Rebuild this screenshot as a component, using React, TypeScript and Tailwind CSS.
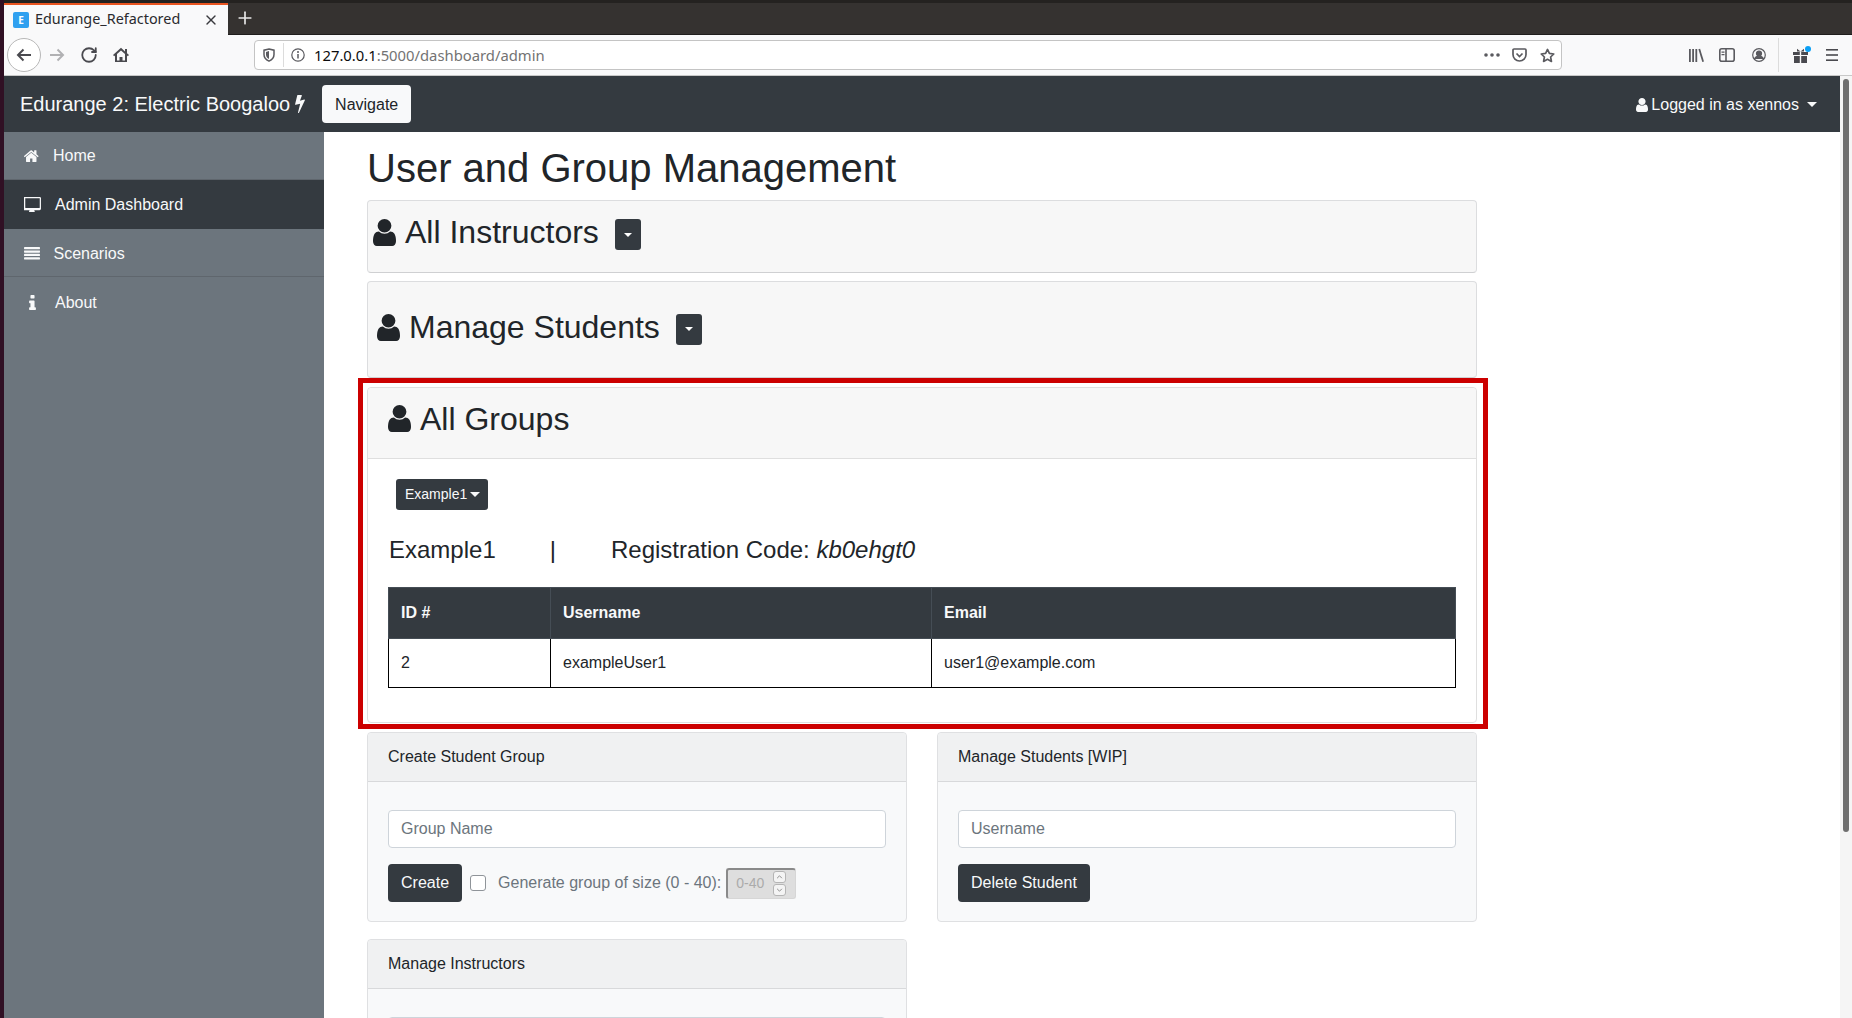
import { X, Plus, RotateCw } from "lucide-react";
import type { ReactNode } from "react";

const USER = "M1536 1399q0 109-62.5 187t-150.5 78h-854q-88 0-150.5-78t-62.5-187q0-85 8.5-160.5t31.5-151.5 58.5-130 94-88.5 134.5-34.5q131 128 313 128t313-128q76 0 134.5 34.5t94 88.5 58.5 130 31.5 151.5 8.5 160.5zm-256-887q0 159-112.5 271.5t-271.5 112.5-271.5-112.5-112.5-271.5 112.5-271.5 271.5-112.5 271.5 112.5 112.5 271.5z";

function UserIcon({ className }: { className: string }) {
  return <svg viewBox="256 128 1280 1536" className={className} fill="currentColor" preserveAspectRatio="none"><path d={USER} /></svg>;
}

function Caret({ small }: { small?: boolean }) {
  return <span className={"inline-block w-0 h-0 border-x-transparent border-t-current " + (small ? "border-x-[4px] border-t-[4px]" : "border-x-[5px] border-t-[5px]")} />;
}

function NavRow({ icon, label, h, active, border = true, nudge = "" }: { icon: ReactNode; label: string; h: string; active?: boolean; border?: boolean; nudge?: string }) {
  return (
    <div className={"flex items-center pl-[20px] text-[16px] text-[#f8f9fa] " + h + " " + nudge + " " + (active ? "bg-[#343a40] " : "") + (border ? "border-b border-[#5f666d]" : "")}>
      {icon}
      <span>{label}</span>
    </div>
  );
}

function CollapsedCard({ title, h, iconLeft, top, btnGap, btnTop }: { title: string; h: string; iconLeft: string; top: string; btnGap: string; btnTop: string }) {
  return (
    <div className={"rounded-[4px] border border-[#dcdddf] border-b-[#cfd0d2] bg-[#f7f7f7] " + h}>
      <div className={"flex items-center " + iconLeft + " " + top}>
        <UserIcon className="w-[23px] h-[27px] text-[#212529] mr-[9px]" />
        <span className="text-[32px] leading-[38px] text-[#212529]">{title}</span>
        <span className={"w-[26px] h-[31px] rounded-[3px] bg-[#343a40] flex items-center justify-center text-white " + btnGap + " " + btnTop}>
          <Caret small />
        </span>
      </div>
    </div>
  );
}

function FormCard({ title, children }: { title: string; children: ReactNode }) {
  return (
    <div className="rounded-[4px] border border-[#dfe0e2] bg-[#f8f9fa] w-full">
      <div className="h-[49px] px-[20px] flex items-center border-b border-[#d8d9db] bg-[#f0f1f2] text-[16px] text-[#212529] rounded-t-[4px]">{title}</div>
      <div className="px-[20px] pt-[28px]">{children}</div>
    </div>
  );
}

function TextInput({ placeholder }: { placeholder?: string }) {
  return (
    <div className="h-[38px] rounded-[4px] border border-[#ced4da] bg-white px-[12px] flex items-center text-[16px] text-[#6c757d]">{placeholder}</div>
  );
}

function DarkButton({ label }: { label: string }) {
  return <span className="h-[38px] px-[13px] rounded-[4px] bg-[#343a40] text-[#f8f9fa] text-[16px] flex items-center">{label}</span>;
}

export default function App() {
  return (
    <div className="w-[1852px] h-[1018px] overflow-hidden flex bg-[#301024] font-['Liberation_Sans',Arial,sans-serif]">
      <div className="w-[4px] shrink-0" />
      <div className="flex-1 flex flex-col min-w-0">
        {/* tab strip */}
        <div className="h-[35px] shrink-0 bg-[#353230] flex items-end relative">
          <div className="absolute inset-x-0 top-0 h-[3px] bg-[#242220]" />
          <div className="absolute inset-x-0 bottom-0 h-px bg-[#1f1d1c]" />
          <div className="z-10 w-[224px] h-[32px] bg-[#f9f9fa] border-t-2 border-[#e95420] flex items-center pl-[9px] relative font-['Noto_Sans',sans-serif]">
            <span className="w-[16px] h-[16px] rounded-[2px] bg-[#30a0f0] text-white text-[10px] font-bold flex items-center justify-center">E</span>
            <span className="ml-[6px] -mt-[2px] text-[14.4px] text-[#2a2a2e]">Edurange_Refactored</span>
            <X className="absolute right-[9px] top-[7px] w-[16px] h-[16px] text-[#3a3a3e]" />
          </div>
          <div className="w-[34px] h-[32px] pb-[2px] flex items-center justify-center">
            <Plus className="w-[20px] h-[20px] text-[#e8e8e8]" />
          </div>
        </div>
        {/* toolbar */}
        <div className="h-[41px] shrink-0 bg-[#f9f9fa] border-b border-[#c8c8c8] flex items-center relative text-[#5a5a5f]">
          <span className="ml-[3px] w-[34px] h-[34px] shrink-0 rounded-full border border-[#b8b8b8] bg-white flex items-center justify-center">
            <svg viewBox="0 0 16 16" className="w-[16px] h-[16px] text-[#4a4a4f]" fill="none" stroke="currentColor" strokeWidth="2"><path d="M15 8H2M7.5 2.5L2 8l5.5 5.5" /></svg>
          </span>
          <svg viewBox="0 0 16 16" className="ml-[8px] w-[16px] h-[16px] text-[#b1b1b3]" fill="none" stroke="currentColor" strokeWidth="2"><path d="M1 8h13M8.5 2.5L14 8l-5.5 5.5" /></svg>
          <RotateCw className="ml-[15px] w-[18px] h-[18px] text-[#4a4a4f]" strokeWidth={2.4} />
          <svg viewBox="0 0 16 16" className="ml-[15px] w-[16px] h-[16px] text-[#4a4a4f]" fill="currentColor"><path d="M8 .8L0 8l1.2 1.3L2 8.6V15h12V8.6l.8.7L16 8l-2-1.8V2h-2v2.4L8 .8zM8 3.4l4 3.6V13.4h-2.5V10h-3v3.4H4V7l4-3.6z" /></svg>
          <div className="ml-[125px] w-[1308px] h-[30px] shrink-0 rounded-[4px] border border-[#c4c4c4] bg-white flex items-center">
            <svg viewBox="0 0 12 14" className="ml-[8px] w-[12px] h-[14px]" fill="none" stroke="currentColor" strokeWidth="1.5"><path d="M6 .9l5 1.3v4.3c0 3.2-2.2 5.4-5 6.6-2.8-1.2-5-3.4-5-6.6V2.2z" /><path d="M6 3v8c-1.8-.9-3-2.4-3-4.5V4z" fill="currentColor" stroke="none" /></svg>
            <span className="ml-[8px] h-[24px] w-px bg-[#dcdcdc]" />
            <svg viewBox="0 0 14 14" className="ml-[7px] w-[14px] h-[14px]" fill="none" stroke="currentColor" strokeWidth="1.2"><circle cx="7" cy="7" r="6.2" /><path d="M7 6v4.5" strokeWidth="1.5" /><circle cx="7" cy="3.9" r="1" fill="currentColor" stroke="none" /></svg>
            <span className="ml-[9px] text-[14.8px] text-[#0c0c0d] font-['Noto_Sans',sans-serif]">127.0.0.1<span className="text-[#737373]">:5000/dashboard/admin</span></span>
            <svg viewBox="0 0 16 4" className="ml-auto w-[16px] h-[4px]" fill="currentColor"><circle cx="2" cy="2" r="1.8" /><circle cx="8" cy="2" r="1.8" /><circle cx="14" cy="2" r="1.8" /></svg>
            <svg viewBox="0 0 15 15" className="ml-[12px] w-[15px] h-[15px]" fill="none" stroke="currentColor" strokeWidth="1.7"><path d="M2 1h11a1 1 0 0 1 1 1v4.5a6.5 6.5 0 0 1-13 0V2a1 1 0 0 1 1-1z" /><path d="M4.5 5.5l3 3 3-3" /></svg>
            <svg viewBox="0 0 16 16" className="ml-[13px] mr-[6px] w-[15px] h-[15px]" fill="none" stroke="currentColor" strokeWidth="1.8" strokeLinejoin="round"><path d="M8 1.5l2 4.3 4.7.6-3.4 3.2.9 4.7L8 12l-4.2 2.3.9-4.7L1.3 6.4 6 5.8z" /></svg>
          </div>
          <svg viewBox="0 0 15 15" className="ml-[127px] w-[15px] h-[15px]" fill="currentColor"><rect x="0" y="1" width="1.8" height="13" /><rect x="3.2" y="1" width="1.8" height="13" /><rect x="6.4" y="1" width="1.8" height="13" /><path d="M9.4 1.2l1.7-.5L15 13.6l-1.7.5z" /></svg>
          <svg viewBox="0 0 16 14" className="ml-[15px] w-[16px] h-[14px]" fill="none" stroke="currentColor" strokeWidth="1.6"><rect x=".8" y=".8" width="14.4" height="12.4" rx="2" /><path d="M7 1v12" /><path d="M2.5 3.5h3v1.2h-3zM2.5 6h3v1.2h-3z" fill="currentColor" stroke="none" /></svg>
          <svg viewBox="0 0 14 14" className="ml-[17px] w-[14px] h-[14px]" fill="none" stroke="currentColor" strokeWidth="1.2"><circle cx="7" cy="7" r="6.3" /><circle cx="7" cy="5.5" r="2.5" fill="currentColor" /><path d="M2.5 11c1-2.2 2.7-2.8 4.5-2.8s3.500.6 4.500 2.800" fill="currentColor" /></svg>
          <span className="ml-[12px] h-[34px] w-px bg-[#dcdcdc]" />
          <span className="ml-[14px] relative">
            <svg viewBox="0 0 15 15" className="block w-[15px] h-[15px] text-[#4a4a4f]" fill="currentColor"><path d="M0 4h6.800v3H0zM8.200 4H15v3H8.200zM1 8h5.800v7H1zM8.200 8H14v7H8.200zM4 .8l3.500 2.700L11 .8v2.800H4z" /></svg>
            <span className="absolute -top-[2px] -right-[3px] w-[6px] h-[6px] rounded-full bg-[#0a9ff5]" />
          </span>
          <svg viewBox="0 0 12 12" className="ml-[18px] w-[12px] h-[12px] text-[#4a4a4f]" fill="currentColor"><rect y="0" width="12" height="1.600" /><rect y="5.200" width="12" height="1.600" /><rect y="10.400" width="12" height="1.600" /></svg>
        </div>
        {/* viewport */}
        <div className="flex-1 min-h-0 flex bg-white overflow-hidden">
          <div className="flex-1 min-w-0 flex flex-col">
            <div className="h-[56px] shrink-0 bg-[#343a40] flex items-center pl-[16px] pr-[23px]">
              <span className="text-[20px] text-[#f8f9fa]">Edurange 2: Electric Boogaloo</span>
              <svg viewBox="440 128 910 1664" className="ml-[5px] w-[10px] h-[18px] text-[#f8f9fa]" fill="currentColor" preserveAspectRatio="none"><path d="M1333 566q18 20 7 44l-540 1157q-13 25-42 25-4 0-14-2-17-5-25.500-19t-4.500-30l197-808-406 101q-4 1-12 1-18 0-31-11-18-15-13-39l201-825q4-14 16-23t28-9h328q19 0 32 12.500t13 29.500q0 8-5 18l-171 463 396-98q8-2 12-2 19 0 34 15z" /></svg>
              <span className="ml-[17px] h-[38px] w-[89px] pt-px rounded-[4px] bg-[#f8f9fa] text-[#212529] text-[16px] flex items-center justify-center">Navigate</span>
              <span className="ml-auto pt-px flex items-center text-[16px] text-[#f8f9fa]">
                <UserIcon className="w-[12px] h-[14px] mr-[3px]" />Logged in as xennos
                <span className="ml-[8px] flex"><Caret /></span>
              </span>
            </div>
            <div className="flex-1 min-h-0 flex">
              <div className="w-[320px] shrink-0 bg-[#6c757d]">
                <NavRow h="h-[48px]" label="Home" icon={<svg viewBox="96 220 1600 1316" className="w-[14.500px] h-[12px] mr-[14.500px]" fill="currentColor"><path d="M1472 992v480q0 26-19 45t-45 19h-384v-384h-256v384h-384q-26 0-45-19t-19-45v-480q0-1 .5-3t.5-3l575-474 575 474q1 2 1 6zm223-69l-62 74q-8 9-21 11h-3q-13 0-21-7l-692-577-692 577q-12 8-24 7-13-2-21-11l-62-74q-8-10-7-23.500t11-21.500l719-599q32-26 76-26t76 26l244 204v-195q0-14 9-23t23-9h192q14 0 23 9t9 23v408l219 182q10 8 11 21.500t-7 23.500z" /></svg>} />
                <NavRow h="h-[49px]" label="Admin Dashboard" active border={false} icon={<svg viewBox="0 128 1792 1536" className="w-[17px] h-[14.500px] mr-[14px]" fill="currentColor"><path d="M1664 1248v-960q0-13-9.500-22.500t-22.500-9.500h-1472q-13 0-22.500 9.500t-9.500 22.500v960q0 13 9.500 22.500t22.500 9.500h1472q13 0 22.500-9.500t9.500-22.500zm128-960v1088q0 66-47 113t-113 47h-544q0 37 16 77.500t32 71 16 43.500q0 26-19 45t-45 19h-512q-26 0-45-19t-19-45q0-14 16-44t32-70 16-78h-544q-66 0-113-47t-47-113v-1088q0-66 47-113t113-47h1632q66 0 113 47t47 113z" /></svg>} />
                <NavRow h="h-[48px]" nudge="pt-[2px]" label="Scenarios" icon={<svg viewBox="0 128 1792 1408" className="w-[16px] h-[12.500px] mr-[13.500px]" fill="currentColor"><path d="M1792 1344v128q0 26-19 45t-45 19h-1664q-26 0-45-19t-19-45v-128q0-26 19-45t45-19h1664q26 0 45 19t19 45zm0-384v128q0 26-19 45t-45 19h-1664q-26 0-45-19t-19-45v-128q0-26 19-45t45-19h1664q26 0 45 19t19 45zm0-384v128q0 26-19 45t-45 19h-1664q-26 0-45-19t-19-45v-128q0-26 19-45t45-19h1664q26 0 45 19t19 45zm0-384v128q0 26-19 45t-45 19h-1664q-26 0-45-19t-19-45v-128q0-26 19-45t45-19h1664q26 0 45 19t19 45z" /></svg>} />
                <NavRow h="h-[49px]" nudge="pt-[2px]" label="About" border={false} icon={<svg viewBox="576 128 640 1408" className="ml-[4.500px] w-[7px] h-[15px] mr-[19.500px]" fill="currentColor"><path d="M1216 1344v128q0 26-19 45t-45 19h-512q-26 0-45-19t-19-45v-128q0-26 19-45t45-19h64v-384h-64q-26 0-45-19t-19-45v-128q0-26 19-45t45-19h384q26 0 45 19t19 45v576h64q26 0 45 19t19 45zm-128-1152v192q0 26-19 45t-45 19h-256q-26 0-45-19t-19-45v-192q0-26 19-45t45-19h256q26 0 45 19t19 45z" /></svg>} />
              </div>
              <div className="w-[1153px] shrink-0 pl-[43px]">
                <h1 className="pt-[12px] h-[68px] text-[40px] leading-[48px] text-[#212529]">User and Group Management</h1>
                <div className="flex flex-col gap-[8px]">
                  <CollapsedCard title="All Instructors" h="h-[73px]" iconLeft="pl-[5px]" top="pt-[12px]" btnGap="ml-[16px]" btnTop="mt-[5px]" />
                  <CollapsedCard title="Manage Students" h="h-[97px]" iconLeft="pl-[9px]" top="pt-[26px]" btnGap="ml-[16px]" btnTop="mt-[4px]" />
                  <div className="relative mt-px">
                    <div className="rounded-[4px] border border-[#dfdfdf] bg-white h-[336px]">
                      <div className="h-[71px] pb-[9px] bg-[#f7f7f7] border-b border-[#dfdfdf] flex items-center pl-[20px] rounded-t-[4px]">
                        <UserIcon className="w-[23px] h-[27px] text-[#212529] mr-[9px]" />
                        <span className="text-[32px] leading-[38px] text-[#212529]">All Groups</span>
                      </div>
                      <div className="pl-[20px] pr-[20px]">
                        <div className="pt-[20px] pl-[8px]">
                          <span className="inline-flex items-center h-[31px] w-[92px] pl-[9px] rounded-[3px] bg-[#343a40] text-[#f8f9fa] text-[14px]">Example1<span className="ml-[3px] flex"><Caret /></span></span>
                        </div>
                        <div className="mt-[22px] pl-px h-[36px] flex items-center text-[24px] text-[#212529]">
                          <span>Example1</span>
                          <span className="ml-[54px]">|</span>
                          <span className="ml-[55px]">Registration Code: <em>kb0ehgt0</em></span>
                        </div>
                        <table className="mt-[19px] w-[1068px] table-fixed border-collapse text-[16px]">
                          <thead>
                            <tr className="h-[51px] bg-[#343a40] text-[#f8f9fa]">
                              <th className="w-[162px] text-left font-bold px-[12px] border border-[#454d55]">ID #</th>
                              <th className="w-[381px] text-left font-bold px-[12px] border border-[#454d55]">Username</th>
                              <th className="text-left font-bold px-[12px] border border-[#454d55]">Email</th>
                            </tr>
                          </thead>
                          <tbody>
                            <tr className="h-[49px] text-[#212529]">
                              <td className="px-[12px] border border-black">2</td>
                              <td className="px-[12px] border border-black">exampleUser1</td>
                              <td className="px-[12px] border border-black">user1@example.com</td>
                            </tr>
                          </tbody>
                        </table>
                      </div>
                    </div>
                    <div className="absolute -left-[9px] -top-[9px] w-[1130px] h-[351px] border-[5px] border-[#cc0000] pointer-events-none" />
                  </div>
                  <div className="grid grid-cols-[540px_540px] gap-x-[30px] gap-y-[17px] mt-px">
                    <FormCard title="Create Student Group">
                      <TextInput placeholder="Group Name" />
                      <div className="mt-[16px] pb-[19px] flex items-center">
                        <DarkButton label="Create" />
                        <span className="ml-[8px] w-[16px] h-[16px] rounded-[3px] border border-[#8f9499] bg-white" />
                        <span className="ml-[12px] text-[16px] text-[#6c757d]">Generate group of size (0 - 40):</span>
                        <span className="ml-[5px] w-[70px] h-[31px] rounded-[3px] border border-[#d6d6d6] border-t-[#8a8a8a] border-l-[#8a8a8a] border-t-2 border-l-2 bg-[#dedede] flex items-center pl-[8px] pr-[9px] text-[14px] text-[#ababab]">
                          0-40
                          <span className="ml-auto flex flex-col gap-[1px]">
                            <span className="w-[13px] h-[12px] rounded-[3px] border border-[#b5b5b5] bg-[#f4f4f4] flex items-center justify-center text-[#777]"><svg viewBox="0 0 8 5" className="w-[7px] h-[4px]" fill="none" stroke="currentColor"><path d="M1 4l3-3 3 3" /></svg></span>
                            <span className="w-[13px] h-[12px] rounded-[3px] border border-[#b5b5b5] bg-[#f4f4f4] flex items-center justify-center text-[#777]"><svg viewBox="0 0 8 5" className="w-[7px] h-[4px]" fill="none" stroke="currentColor"><path d="M1 1l3 3 3-3" /></svg></span>
                          </span>
                        </span>
                      </div>
                    </FormCard>
                    <FormCard title="Manage Students [WIP]">
                      <TextInput placeholder="Username" />
                      <div className="mt-[16px] pb-[19px] flex"><DarkButton label="Delete Student" /></div>
                    </FormCard>
                    <FormCard title="Manage Instructors">
                      <TextInput />
                    </FormCard>
                  </div>
                </div>
              </div>
              <div className="flex-1" />
            </div>
          </div>
          <div className="w-[12px] shrink-0 bg-[#f5f5f5] relative">
            <div className="absolute left-[3px] top-[3px] w-[6px] h-[753px] rounded-full bg-[#6f6f6f]" />
          </div>
        </div>
      </div>
    </div>
  );
}
